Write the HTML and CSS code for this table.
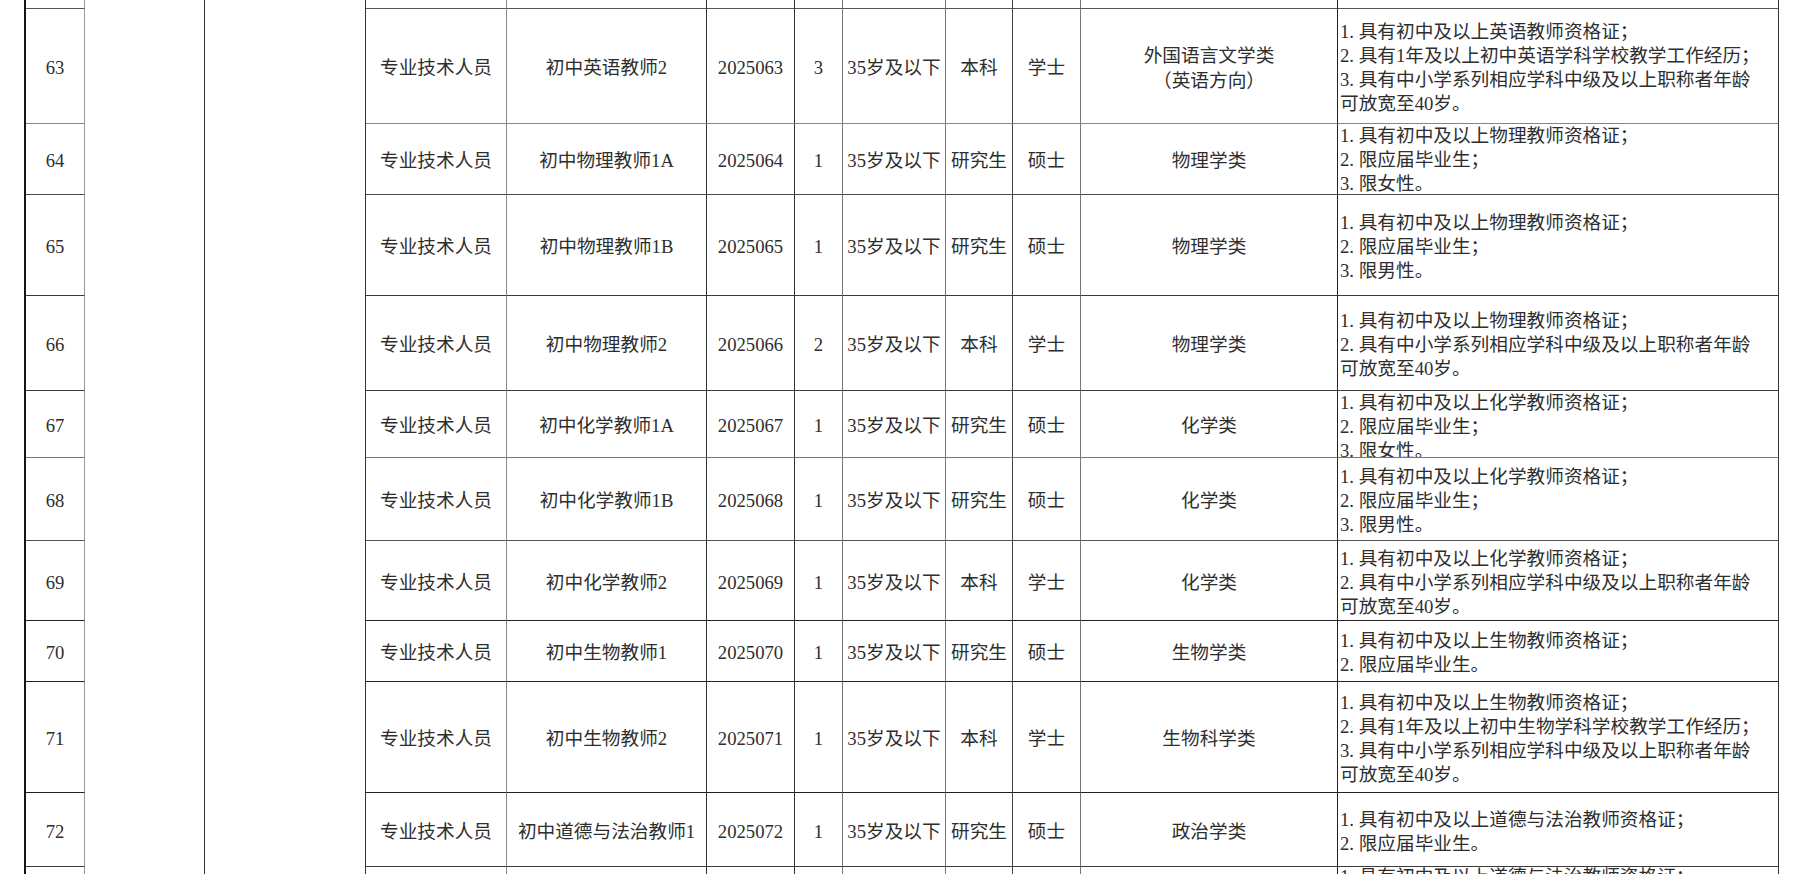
FILE: index.html
```html
<!DOCTYPE html>
<html lang="zh-CN">
<head>
<meta charset="utf-8">
<title>岗位表</title>
<link rel="stylesheet" href="styles.css">
</head>
<body>
<div class="sheet">
  <div class="merge m2"></div>
  <div class="merge m3"></div>

  <div class="row r62"><div></div><div></div><div></div><div></div><div></div><div></div><div></div><div></div><div></div><div></div></div>

  <div class="row r63">
    <div>63</div><div>专业技术人员</div><div>初中英语教师2</div><div>2025063</div><div>3</div><div>35岁及以下</div><div>本科</div><div>学士</div>
    <div class="major">外国语言文学类<br>（英语方向）</div>
    <div><p class="lines"><span class="n">1.</span>具有初中及以上英语教师资格证；<br><span class="n">2.</span>具有1年及以上初中英语学科学校教学工作经历；<br><span class="n">3.</span>具有中小学系列相应学科中级及以上职称者年龄<br>可放宽至40岁。</p></div>
  </div>

  <div class="row r64">
    <div>64</div><div>专业技术人员</div><div>初中物理教师1A</div><div>2025064</div><div>1</div><div>35岁及以下</div><div>研究生</div><div>硕士</div><div>物理学类</div>
    <div class="top"><p class="lines"><span class="n">1.</span>具有初中及以上物理教师资格证；<br><span class="n">2.</span>限应届毕业生；<br><span class="n">3.</span>限女性。</p></div>
  </div>

  <div class="row r65">
    <div>65</div><div>专业技术人员</div><div>初中物理教师1B</div><div>2025065</div><div>1</div><div>35岁及以下</div><div>研究生</div><div>硕士</div><div>物理学类</div>
    <div><p class="lines"><span class="n">1.</span>具有初中及以上物理教师资格证；<br><span class="n">2.</span>限应届毕业生；<br><span class="n">3.</span>限男性。</p></div>
  </div>

  <div class="row r66">
    <div>66</div><div>专业技术人员</div><div>初中物理教师2</div><div>2025066</div><div>2</div><div>35岁及以下</div><div>本科</div><div>学士</div><div>物理学类</div>
    <div><p class="lines"><span class="n">1.</span>具有初中及以上物理教师资格证；<br><span class="n">2.</span>具有中小学系列相应学科中级及以上职称者年龄<br>可放宽至40岁。</p></div>
  </div>

  <div class="row r67">
    <div>67</div><div>专业技术人员</div><div>初中化学教师1A</div><div>2025067</div><div>1</div><div>35岁及以下</div><div>研究生</div><div>硕士</div><div>化学类</div>
    <div class="top"><p class="lines"><span class="n">1.</span>具有初中及以上化学教师资格证；<br><span class="n">2.</span>限应届毕业生；<br><span class="n">3.</span>限女性。</p></div>
  </div>

  <div class="row r68">
    <div>68</div><div>专业技术人员</div><div>初中化学教师1B</div><div>2025068</div><div>1</div><div>35岁及以下</div><div>研究生</div><div>硕士</div><div>化学类</div>
    <div><p class="lines"><span class="n">1.</span>具有初中及以上化学教师资格证；<br><span class="n">2.</span>限应届毕业生；<br><span class="n">3.</span>限男性。</p></div>
  </div>

  <div class="row r69">
    <div>69</div><div>专业技术人员</div><div>初中化学教师2</div><div>2025069</div><div>1</div><div>35岁及以下</div><div>本科</div><div>学士</div><div>化学类</div>
    <div><p class="lines"><span class="n">1.</span>具有初中及以上化学教师资格证；<br><span class="n">2.</span>具有中小学系列相应学科中级及以上职称者年龄<br>可放宽至40岁。</p></div>
  </div>

  <div class="row r70">
    <div>70</div><div>专业技术人员</div><div>初中生物教师1</div><div>2025070</div><div>1</div><div>35岁及以下</div><div>研究生</div><div>硕士</div><div>生物学类</div>
    <div><p class="lines"><span class="n">1.</span>具有初中及以上生物教师资格证；<br><span class="n">2.</span>限应届毕业生。</p></div>
  </div>

  <div class="row r71">
    <div>71</div><div>专业技术人员</div><div>初中生物教师2</div><div>2025071</div><div>1</div><div>35岁及以下</div><div>本科</div><div>学士</div><div>生物科学类</div>
    <div><p class="lines"><span class="n">1.</span>具有初中及以上生物教师资格证；<br><span class="n">2.</span>具有1年及以上初中生物学科学校教学工作经历；<br><span class="n">3.</span>具有中小学系列相应学科中级及以上职称者年龄<br>可放宽至40岁。</p></div>
  </div>

  <div class="row r72">
    <div>72</div><div>专业技术人员</div><div>初中道德与法治教师1</div><div>2025072</div><div>1</div><div>35岁及以下</div><div>研究生</div><div>硕士</div><div>政治学类</div>
    <div><p class="lines"><span class="n">1.</span>具有初中及以上道德与法治教师资格证；<br><span class="n">2.</span>限应届毕业生。</p></div>
  </div>

  <div class="row r73">
    <div></div><div></div><div></div><div></div><div></div><div></div><div></div><div></div><div></div>
    <div class="top peek"><p class="lines"><span class="n">1.</span>具有初中及以上道德与法治教师资格证；</p></div>
  </div>
</div>
</body>
</html>
```

FILE: styles.css
```css
html, body {
  margin: 0;
  padding: 0;
  background: #ffffff;
  overflow: hidden;
}

body {
  font-family: "Liberation Serif", "Noto Sans CJK SC", serif;
  font-size: 18.67px;
  color: #2e2e2e;
}

.sheet {
  display: grid;
  grid-template-columns: 59px 120px 161px 141px 200px 88px 48px 103px 67px 68px 257px 441px;
  grid-template-rows: 9px 115px 71px 101px 95px 67px 83px 80px 61px 111px 74px 90px;
  width: 1753px;
  height: 874px;
  overflow: hidden;
  margin-left: 24px;
  border-left: 2px solid #151515;
}

.merge {
  box-sizing: border-box;
  border-right: 1px solid #333333;
}

.m2 {
  grid-column: 2;
  grid-row: 1 / span 12;
}

.m3 {
  grid-column: 3;
  grid-row: 1 / span 12;
}

.row {
  display: contents;
}

.row > div {
  box-sizing: border-box;
  display: flex;
  flex-direction: column;
  justify-content: center;
  padding-top: 4px;
  overflow: hidden;
  text-align: center;
  line-height: 24px;
  white-space: nowrap;
  border-right: 1px solid #333333;
  border-bottom: 1px solid #3a3a3a;
}

/* column-specific right borders */
.row > div:nth-child(1) { border-right-color: #9a9a9a; }
.row > div:nth-child(2) { border-right-color: #888888; }
.row > div:nth-child(3) { border-right-color: #333333; }
.row > div:nth-child(4) { border-right-color: #333333; }
.row > div:nth-child(5) { border-right-color: #777777; }
.row > div:nth-child(6) { border-right-color: #777777; }
.row > div:nth-child(7) { border-right-color: #444444; }
.row > div:nth-child(8) { border-right-color: #777777; }
.row > div:nth-child(9) { border-right-color: #222222; }
.row > div:nth-child(10) {
  border-right-color: #333333;
  text-align: left;
  padding-left: 2px;
}

.lines {
  margin: 0;
}

/* list numbers occupy a full-width cell like the sheet's font */
.n {
  display: inline-block;
  width: 18.67px;
}

.row > div.major {
  padding-top: 3px;
  line-height: 25px;
}

.row > div.top {
  justify-content: flex-start;
  padding-top: 0;
}

.row > div.peek {
  padding-top: 0;
  margin-top: -2px;
}

/* row-specific bottom borders */
.r62 > div { border-bottom-color: #555555; }
.r63 > div { border-bottom-color: #858585; }
.r64 > div { border-bottom-color: #4a4a4a; }
.r67 > div { border-bottom-color: #777777; }
.r68 > div { border-bottom-color: #555555; }
.r69 > div,
.r70 > div,
.r71 > div { border-bottom-color: #222222; }
```
